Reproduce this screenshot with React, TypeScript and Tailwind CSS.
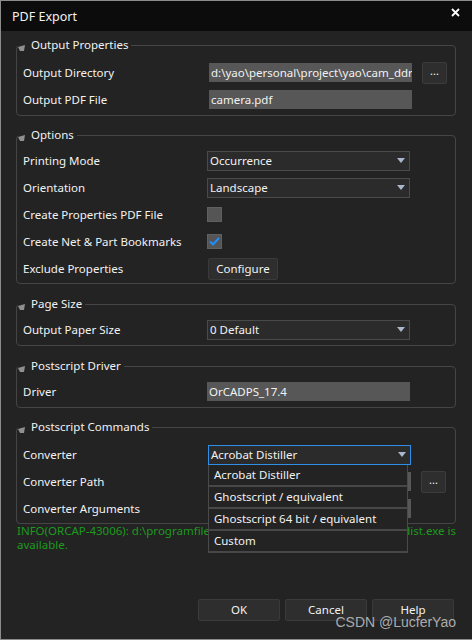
import React from 'react';

const Arrow = () => (
  <svg width="8" height="5" viewBox="0 0 8 5" className="shrink-0">
    <polygon points="0,0 8,0 4,5" fill="#a9b6cc" />
  </svg>
);

const Corner = () => (
  <svg width="7" height="6" viewBox="0 0 7 6" className="mt-[5px] shrink-0">
    <polygon points="0,2 7,0 6,6 2,6" fill="#8f8f8f" />
  </svg>
);

const Group: React.FC<{ title: string; pt?: string; pb?: string; children: React.ReactNode; className?: string }> = ({
  title,
  pt = 'pt-[4px]',
  pb = 'pb-[2px]',
  children,
  className = '',
}) => (
  <fieldset className={`rounded-[4px] border border-[#454545] ${className}`}>
    <legend className="ml-[1px] flex h-[16px] items-center gap-[6px] pr-[3px] leading-[16px]">
      <Corner />
      <span>{title}</span>
    </legend>
    <div className={`px-[6px] ${pt} ${pb}`}>{children}</div>
  </fieldset>
);

const Row: React.FC<{ label: string; children?: React.ReactNode }> = ({ label, children }) => (
  <div className="flex h-[27px] items-center">
    <div className="w-[184px] shrink-0 whitespace-nowrap">{label}</div>
    {children}
  </div>
);

const TextBox: React.FC<{ value?: string; className?: string }> = ({ value = '', className = '' }) => (
  <div
    className={`h-[19px] w-[203px] overflow-hidden whitespace-nowrap bg-[#575757] px-[2px] leading-[19px] ${className}`}
  >
    {value}
  </div>
);

const Select: React.FC<{ value: string; active?: boolean }> = ({ value, active }) => (
  <div
    className={`flex h-[20px] w-[203px] items-center justify-between border bg-[#2b2b2b] pl-[2px] pr-[4px] ${
      active ? 'border-[#2f8ee6]' : 'border-[#4a4a4a]'
    }`}
  >
    <span className="whitespace-nowrap">{value}</span>
    <Arrow />
  </div>
);

const Browse = () => (
  <div className="ml-[10px] flex h-[22px] w-[25px] items-center justify-center rounded-[2px] border border-[#3c3c3c] bg-[#2e2e2e] pb-[4px] text-[11px] leading-none">
    ...
  </div>
);

const Check: React.FC<{ checked?: boolean }> = ({ checked }) => (
  <div className="flex h-[15px] w-[15px] items-center justify-center border border-[#606060] bg-[#555555]">
    {checked && (
      <svg width="11" height="9" viewBox="0 0 11 9">
        <polyline points="1,4.5 4,7.5 10,1" fill="none" stroke="#1e8fff" strokeWidth="2" />
      </svg>
    )}
  </div>
);

const Btn: React.FC<{ label: string; className?: string }> = ({ label, className = '' }) => (
  <div
    className={`flex h-[22px] items-center justify-center rounded-[2px] border border-[#3a3a3a] bg-[#2e2e2e] ${className}`}
  >
    {label}
  </div>
);

const options = ['Acrobat Distiller', 'Ghostscript / equivalent', 'Ghostscript 64 bit / equivalent', 'Custom'];

export default function App() {
  return (
    <div className="relative flex h-[640px] w-[472px] flex-col overflow-hidden border-b border-l border-t border-[#8c8c8c] bg-[#232323] font-['Noto_Sans',sans-serif] text-[11.5px] text-[#f2f2f2]">
      <div className="flex h-[30px] shrink-0 items-center justify-between bg-[#0c0c0c] pl-[11px] pr-[12px]">
        <span className="mt-[3px] text-[12.5px]">PDF Export</span>
        <svg width="9" height="9" viewBox="0 0 9 9" className="-mt-[8px]">
          <path d="M1 1 L8 8 M8 1 L1 8" stroke="#ffffff" strokeWidth="1.8" />
        </svg>
      </div>

      <div className="pl-[15px] pr-[16px] pt-[6px]">
        <Group title="Output Properties" pt="pt-[6px]">
          <Row label="Output Directory">
            <TextBox value="d:\yao\personal\project\yao\cam_ddr\allegro" className="ml-[2px]" />
            <Browse />
          </Row>
          <Row label="Output PDF File">
            <TextBox value="camera.pdf" className="ml-[2px]" />
          </Row>
        </Group>

        <Group title="Options" className="mt-[11px]" pt="pt-[4px]" pb="pb-[1px]">
          <Row label="Printing Mode">
            <Select value="Occurrence" />
          </Row>
          <Row label="Orientation">
            <Select value="Landscape" />
          </Row>
          <Row label="Create Properties PDF File">
            <Check />
          </Row>
          <Row label="Create Net & Part Bookmarks">
            <Check checked />
          </Row>
          <Row label="Exclude Properties">
            <Btn label="Configure" className="ml-[1px] w-[70px]" />
          </Row>
        </Group>

        <Group title="Page Size" className="mt-[12px]">
          <Row label="Output Paper Size">
            <Select value="0 Default" />
          </Row>
        </Group>

        <Group title="Postscript Driver" className="mt-[12px]">
          <Row label="Driver">
            <TextBox value="OrCADPS_17.4" />
          </Row>
        </Group>

        <Group title="Postscript Commands" className="mt-[11px]" pt="pt-[6px]" pb="pb-[1px]">
          <Row label="Converter">
            <div className="relative ml-[1px]">
              <Select value="Acrobat Distiller" active />
              <div className="absolute left-0 top-full z-10 w-[200px] border-x border-[#4a4a4a] bg-[#232323]">
                {options.map((o) => (
                  <div
                    key={o}
                    className="flex h-[22px] items-center whitespace-nowrap border-b-2 border-[#474747] pl-[5px]"
                  >
                    {o}
                  </div>
                ))}
              </div>
            </div>
          </Row>
          <Row label="Converter Path">
            <TextBox className="ml-[1px] bg-[#2b2b2b]" />
            <Browse />
          </Row>
          <Row label="Converter Arguments">
            <TextBox className="ml-[1px] bg-[#2b2b2b]" />
          </Row>
        </Group>

        <div className="pl-[1px] leading-[14px] text-[#1d9a1d]">
          <div className="flex justify-between whitespace-nowrap">
            <span>INFO(ORCAP-43006): d:\programfiles\adobe\acrobat</span>
            <span>acrodist.exe is</span>
          </div>
          <div>available.</div>
        </div>
      </div>

      <div className="flex-1" />

      <div className="flex justify-end gap-[5px] pb-[18px] pr-[18px]">
        <Btn label="OK" className="w-[82px]" />
        <Btn label="Cancel" className="w-[82px]" />
        <Btn label="Help" className="w-[82px]" />
      </div>

      <div className="absolute bottom-[6px] right-[16px] font-['Liberation_Sans',sans-serif] text-[14px] text-[#d0d0d0]/80">
        CSDN @LucferYao
      </div>
    </div>
  );
}
